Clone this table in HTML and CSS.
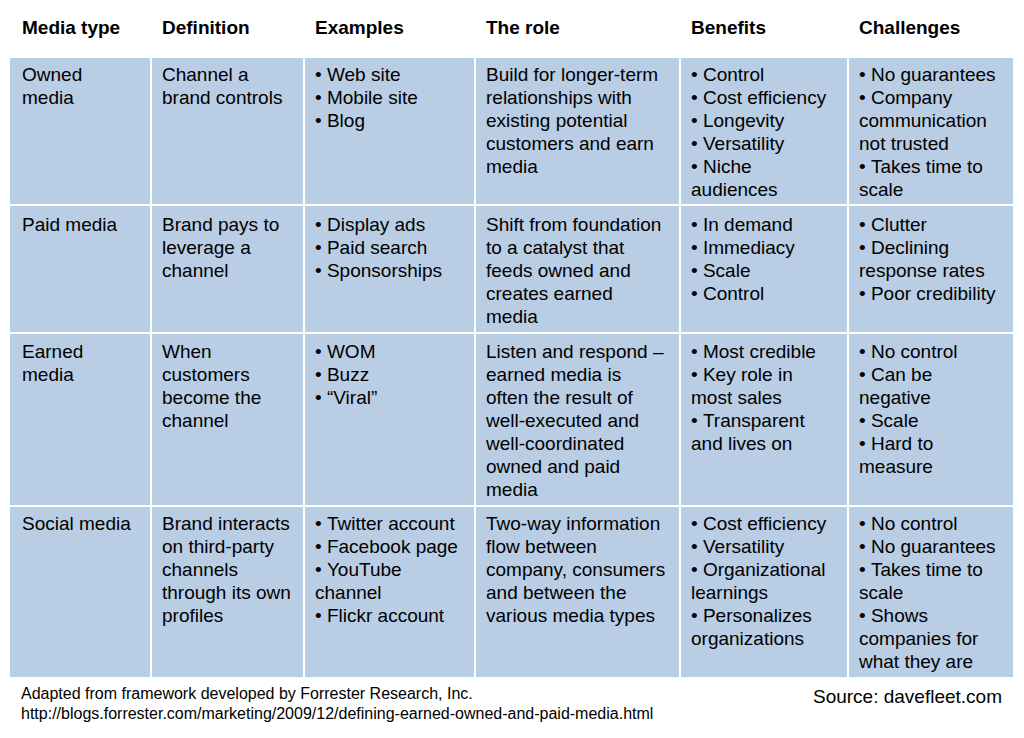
FILE: index.html
```html
<!DOCTYPE html>
<html lang="en">
<head>
<meta charset="utf-8">
<title>Owned, paid, earned and social media</title>
<link rel="stylesheet" href="styles.css">
</head>
<body>
<div class="grid">
  <div class="hd c1">Media type</div>
  <div class="hd">Definition</div>
  <div class="hd">Examples</div>
  <div class="hd">The role</div>
  <div class="hd">Benefits</div>
  <div class="hd">Challenges</div>

  <div class="cell c1">Owned<br>media</div>
  <div class="cell">Channel a<br>brand controls</div>
  <div class="cell"><ul><li>Web site</li><li>Mobile site</li><li>Blog</li></ul></div>
  <div class="cell">Build for longer-term<br>relationships with<br>existing potential<br>customers and earn<br>media</div>
  <div class="cell"><ul><li>Control</li><li>Cost efficiency</li><li>Longevity</li><li>Versatility</li><li>Niche<br>audiences</li></ul></div>
  <div class="cell"><ul><li>No guarantees</li><li>Company<br>communication<br>not trusted</li><li>Takes time to<br>scale</li></ul></div>

  <div class="cell r2 c1">Paid media</div>
  <div class="cell r2">Brand pays to<br>leverage a<br>channel</div>
  <div class="cell r2"><ul><li>Display ads</li><li>Paid search</li><li>Sponsorships</li></ul></div>
  <div class="cell r2">Shift from foundation<br>to a catalyst that<br>feeds owned and<br>creates earned<br>media</div>
  <div class="cell r2"><ul><li>In demand</li><li>Immediacy</li><li>Scale</li><li>Control</li></ul></div>
  <div class="cell r2"><ul><li>Clutter</li><li>Declining<br>response rates</li><li>Poor credibility</li></ul></div>

  <div class="cell r3 c1">Earned<br>media</div>
  <div class="cell r3">When<br>customers<br>become the<br>channel</div>
  <div class="cell r3"><ul><li>WOM</li><li>Buzz</li><li>“Viral”</li></ul></div>
  <div class="cell r3">Listen and respond –<br>earned media is<br>often the result of<br>well-executed and<br>well-coordinated<br>owned and paid<br>media</div>
  <div class="cell r3"><ul><li>Most credible</li><li>Key role in<br>most sales</li><li>Transparent<br>and lives on</li></ul></div>
  <div class="cell r3"><ul><li>No control</li><li>Can be<br>negative</li><li>Scale</li><li>Hard to<br>measure</li></ul></div>

  <div class="cell c1">Social media</div>
  <div class="cell">Brand interacts<br>on third-party<br>channels<br>through its own<br>profiles</div>
  <div class="cell"><ul><li>Twitter account</li><li>Facebook page</li><li>YouTube<br>channel</li><li>Flickr account</li></ul></div>
  <div class="cell">Two-way information<br>flow between<br>company, consumers<br>and between the<br>various media types</div>
  <div class="cell"><ul><li>Cost efficiency</li><li>Versatility</li><li>Organizational<br>learnings</li><li>Personalizes<br>organizations</li></ul></div>
  <div class="cell"><ul><li>No control</li><li>No guarantees</li><li>Takes time to<br>scale</li><li>Shows<br>companies for<br>what they are</li></ul></div>
</div>
<div class="footer">
  <div class="credit">
    <div>Adapted from framework developed by Forrester Research, Inc.</div>
    <div>http://blogs.forrester.com/marketing/2009/12/defining-earned-owned-and-paid-media.html</div>
  </div>
  <div class="source">Source: davefleet.com</div>
</div>
</body>
</html>
```
FILE: styles.css
```css
html, body {
  margin: 0;
  padding: 0;
  background: #ffffff;
}
body {
  width: 1024px;
  height: 738px;
  overflow: hidden;
  font-family: "Liberation Sans", Arial, sans-serif;
  color: #000;
}
.grid {
  display: grid;
  grid-template-columns: 140px 151px 169px 203px 166px 164px;
  grid-template-rows: 56px 146px 126px 171px 170px;
  gap: 2px;
  margin-left: 10px;
  width: 1003px;
  font-size: 19px;
  line-height: 23px;
}
.hd {
  font-weight: bold;
  padding: 16px 0 0 10px;
}
.cell {
  background: #b9cde5;
  padding: 5px 6px 0 10px;
}
.cell.r2 {
  padding-top: 7px;
}
.cell.r3 {
  padding-top: 6px;
}
.c1 {
  padding-left: 12px;
}
ul {
  list-style: none;
  margin: 0;
  padding: 0;
}
li::before {
  content: "\2022\00a0";
}
.footer {
  display: flex;
  justify-content: space-between;
  padding: 0 22px 0 21px;
}
.credit {
  font-size: 16px;
  line-height: 20px;
  padding-top: 7px;
}
.source {
  font-size: 19px;
  line-height: 23px;
  padding-top: 8px;
}
```
